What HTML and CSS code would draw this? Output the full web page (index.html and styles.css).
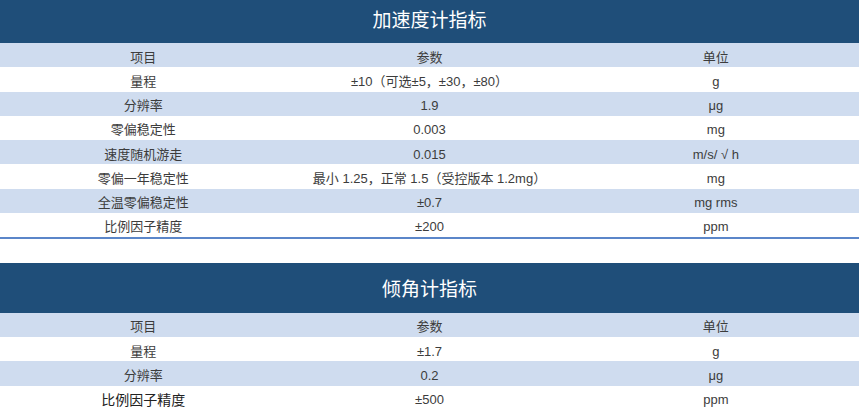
FILE: index.html
```html
<!DOCTYPE html>
<html lang="zh-CN">
<head>
<meta charset="utf-8">
<link rel="stylesheet" href="styles.css">
</head>
<body>
<div class="page">
  <section class="spec spec-first">
    <div class="title">加速度计指标</div>
    <div class="row alt"><div>项目</div><div>参数</div><div>单位</div></div>
    <div class="row"><div>量程</div><div>±10（可选±5，±30，±80）</div><div>g</div></div>
    <div class="row alt"><div>分辨率</div><div>1.9</div><div>μg</div></div>
    <div class="row"><div>零偏稳定性</div><div>0.003</div><div>mg</div></div>
    <div class="row alt"><div>速度随机游走</div><div>0.015</div><div>m/s/ √ h</div></div>
    <div class="row"><div>零偏一年稳定性</div><div>最小 1.25，正常 1.5（受控版本 1.2mg）</div><div>mg</div></div>
    <div class="row alt"><div>全温零偏稳定性</div><div>±0.7</div><div>mg rms</div></div>
    <div class="row last"><div>比例因子精度</div><div>±200</div><div>ppm</div></div>
  </section>
  <section class="spec">
    <div class="title">倾角计指标</div>
    <div class="row alt"><div>项目</div><div>参数</div><div>单位</div></div>
    <div class="row"><div>量程</div><div>±1.7</div><div>g</div></div>
    <div class="row alt"><div>分辨率</div><div>0.2</div><div>μg</div></div>
    <div class="row"><div class="big">比例因子精度</div><div>±500</div><div>ppm</div></div>
  </section>
</div>
</body>
</html>
```
FILE: styles.css
```css
html, body {
  margin: 0;
  padding: 0;
  background: #ffffff;
}
body {
  font-family: "Liberation Sans", "Noto Sans CJK SC", sans-serif;
  color: #3c3c3c;
  font-size: 13px;
  overflow: hidden;
}
.page {
  width: 859px;
  margin-top: -7px;
}
.spec-first {
  margin-bottom: 24px;
}
.title {
  height: 50px;
  background: #1f4e79;
  color: #ffffff;
  font-family: "Noto Sans CJK SC", sans-serif;
  font-size: 19px;
  display: flex;
  align-items: center;
  justify-content: center;
}
.row {
  display: grid;
  grid-template-columns: 1fr 1fr 1fr;
  height: 24.25px;
  align-items: center;
  text-align: center;
  background: #ffffff;
  line-height: 1;
  padding-top: 4px;
  box-sizing: border-box;
}
.row.alt {
  background: #cfdcef;
}
.row.last {
  border-bottom: 2px solid #5b86c9;
  height: 26px;
}
.big {
  font-size: 14px;
  color: #222222;
}
```
